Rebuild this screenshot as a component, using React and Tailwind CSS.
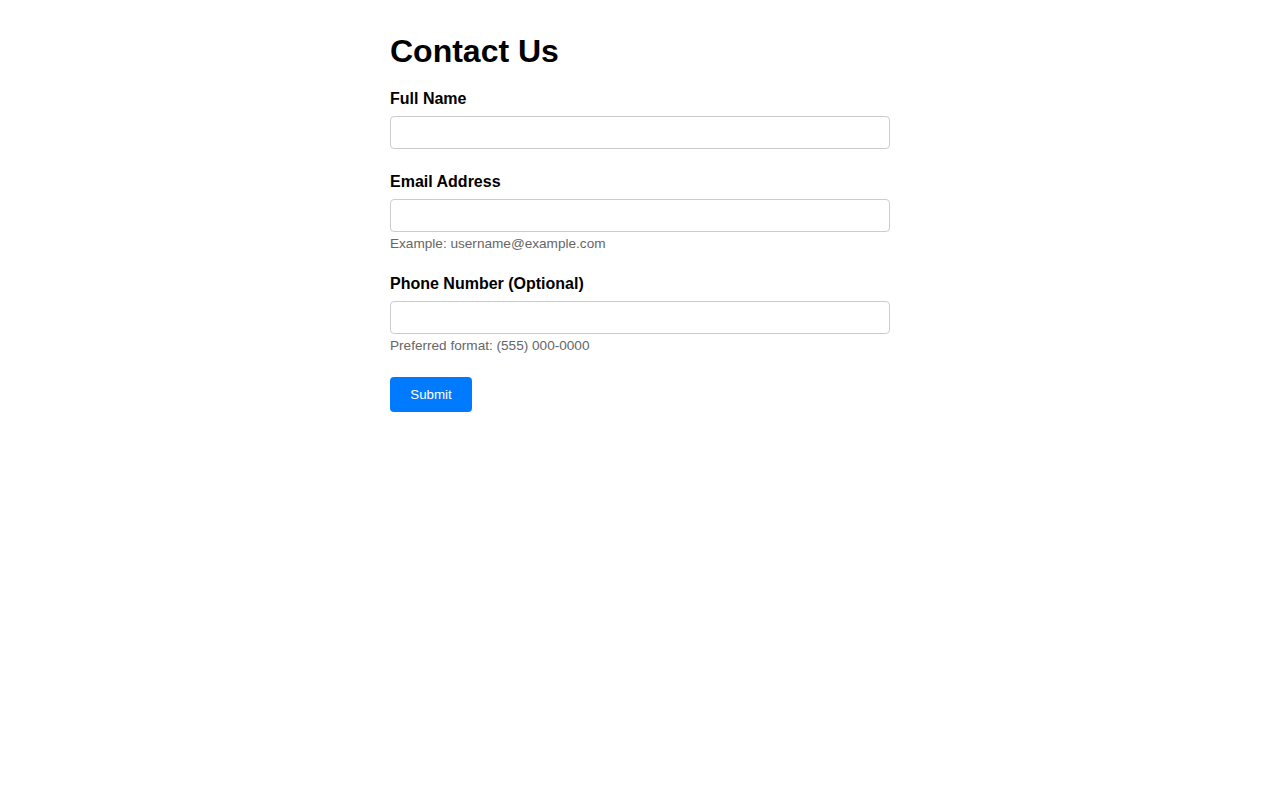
export default function App() {
  const font = { fontFamily: '"Liberation Sans", Arial, Helvetica, sans-serif' };
  return (
    <div className="min-h-[800px] bg-white text-black" style={font}>
      <div className="mx-auto w-[500px] pt-[33px]">
        <h1 className="text-[32px] font-bold leading-[37px] mb-[20px]">Contact Us</h1>
        <form onSubmit={(e) => e.preventDefault()}>
          <div className="mb-6">
            <label className="block text-[16px] font-bold leading-[18px] mb-2">Full Name</label>
            <input type="text" className="block w-full h-[33px] border border-[#cccccc] rounded-[4px] px-2 text-[16px] outline-none" />
          </div>
          <div className="mb-[23px]">
            <label className="block text-[16px] font-bold leading-[18px] mb-2">Email Address</label>
            <input type="email" className="block w-full h-[33px] border border-[#cccccc] rounded-[4px] px-2 text-[16px] outline-none" />
            <div className="mt-[4px] text-[13.6px] leading-[16px] text-[#666666]">Example: username@example.com</div>
          </div>
          <div className="mb-[23px]">
            <label className="block text-[16px] font-bold leading-[18px] mb-2">Phone Number (Optional)</label>
            <input type="tel" className="block w-full h-[33px] border border-[#cccccc] rounded-[4px] px-2 text-[16px] outline-none" />
            <div className="mt-[4px] text-[13.6px] leading-[16px] text-[#666666]">Preferred format: (555) 000-0000</div>
          </div>
          <button type="submit" className="h-[35px] w-[82px] bg-[#007bff] text-white text-[13.33px] rounded-[4px] leading-[15px]">Submit</button>
        </form>
      </div>
    </div>
  );
}
